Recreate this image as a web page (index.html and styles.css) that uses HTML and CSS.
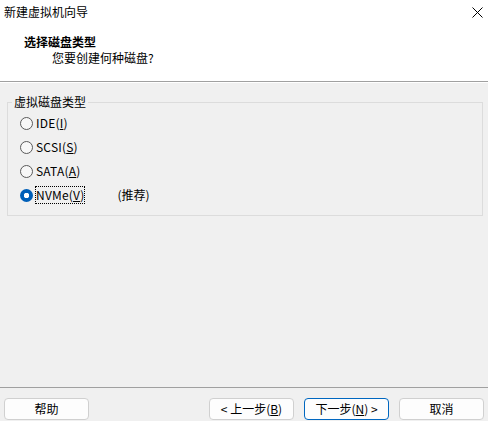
FILE: index.html
```html
<!DOCTYPE html>
<html lang="zh-CN">
<head>
<meta charset="utf-8">
<title>新建虚拟机向导</title>
<link rel="stylesheet" href="styles.css">
</head>
<body>
<div class="window">
  <div class="header">
    <div class="titlebar">
      <span class="title">新建虚拟机向导</span>
      <svg class="close" width="11" height="11" viewBox="0 0 11 11"><path d="M0.5 0.5 L10.5 10.5 M10.5 0.5 L0.5 10.5" stroke="#000" stroke-width="1" fill="none"/></svg>
    </div>
    <div class="heading">选择磁盘类型</div>
    <div class="subheading">您要创建何种磁盘?</div>
  </div>
  <div class="content">
    <fieldset class="group">
      <legend class="group-label">虚拟磁盘类型</legend>
      <div class="option"><span class="radio"></span><span class="label">IDE(<u>I</u>)</span></div>
      <div class="option"><span class="radio"></span><span class="label">SCSI(<u>S</u>)</span></div>
      <div class="option"><span class="radio"></span><span class="label">SATA(<u>A</u>)</span></div>
      <div class="option"><span class="radio checked"></span><span class="label focus">NVMe(<u>V</u>)</span><span class="hint">(推荐)</span></div>
    </fieldset>
  </div>
  <div class="footer">
    <button class="btn">帮助</button>
    <div class="nav">
      <button class="btn">&lt; 上一步(<u>B</u>)</button>
      <button class="btn default">下一步(<u>N</u>) &gt;</button>
      <button class="btn">取消</button>
    </div>
  </div>
</div>
</body>
</html>
```

FILE: styles.css
```css
html, body {
  margin: 0;
  padding: 0;
}
body {
  width: 488px;
  height: 421px;
  background: #f0f0f0;
  font-family: "Noto Sans CJK SC", "Microsoft YaHei", sans-serif;
  font-size: 12px;
  line-height: 16px;
  color: #000;
  overflow: hidden;
}
.window {
  display: flex;
  flex-direction: column;
  height: 421px;
}
.header {
  background: #fff;
  height: 81px;
  border-bottom: 1px solid #a0a0a0;
  box-shadow: 0 1px 0 #ffffff;
}
.titlebar {
  display: flex;
  justify-content: space-between;
  align-items: flex-start;
  height: 34px;
  padding: 4px 5px 0 4px;
  box-sizing: border-box;
}
.close {
  margin-top: 3px;
}
.heading {
  padding-left: 24px;
  font-weight: bold;
}
.subheading {
  padding-left: 52px;
}
.content {
  flex: 1;
  padding: 12px 5px 0 7px;
}
.group {
  margin: 0;
  padding: 1px 0 8px 0;
  border: 1px solid #dcdcdc;
  min-width: 0;
}
.group-label {
  margin-left: 4px;
  padding: 0 2px;
}
.option {
  display: flex;
  align-items: center;
  height: 24px;
  padding-left: 12px;
}
.radio {
  width: 13px;
  height: 13px;
  box-sizing: border-box;
  border: 1px solid #5a5a5a;
  border-radius: 50%;
  background: #f7f7f7;
  margin-right: 3px;
  flex: none;
}
.radio.checked {
  border: none;
  background: radial-gradient(circle, #ffffff 0 2.5px, #005fb8 3px);
}
.label {
  letter-spacing: 0.2px;
}
.label.focus {
  outline: 1px dotted #000;
  outline-offset: 0;
}
.hint {
  margin-left: 33px;
}
.footer {
  display: flex;
  justify-content: space-between;
  border-top: 1px solid #a0a0a0;
  height: 34px;
  padding: 10px 4px 0 4px;
  box-sizing: border-box;
  flex: none;
}
.nav {
  display: flex;
  gap: 10px;
}
.btn {
  width: 85px;
  height: 22px;
  padding: 0;
  box-sizing: border-box;
  border: 1px solid #d0d0d0;
  border-radius: 4px;
  background: #fdfdfd;
  font-family: inherit;
  font-size: 12px;
  line-height: 16px;
  color: #000;
}
.btn.default {
  border-color: #0067c0;
}
```
